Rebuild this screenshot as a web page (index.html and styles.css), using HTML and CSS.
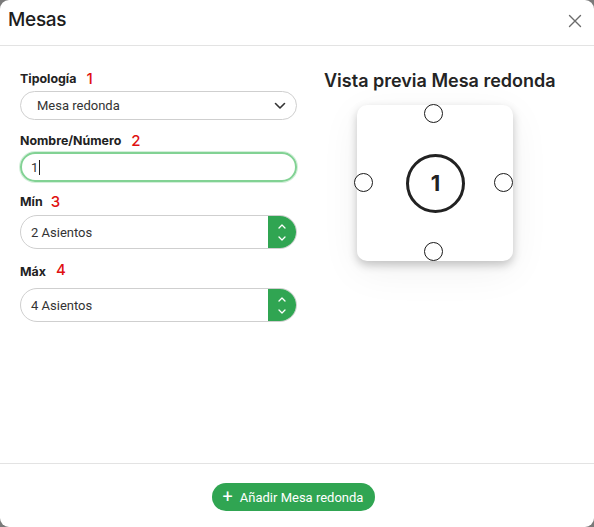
FILE: index.html
```html
<!DOCTYPE html>
<html lang="es">
<head>
<meta charset="utf-8">
<title>Mesas</title>
<link rel="stylesheet" href="styles.css">
</head>
<body>
<div class="modal">
  <header class="modal-header">
    <h1 class="modal-title">Mesas</h1>
    <button class="close-btn" aria-label="Cerrar">
      <svg width="14" height="14" viewBox="0 0 14 14"><path d="M1.5 1.5 L12.5 12.5 M12.5 1.5 L1.5 12.5" stroke="#6b6b6b" stroke-width="1.4" fill="none" stroke-linecap="round"/></svg>
    </button>
  </header>
  <main class="modal-body">
    <form class="form-col">
      <div class="field f1">
        <label class="label">Tipología <span class="num">1</span></label>
        <div class="select">
          <span>Mesa redonda</span>
          <svg width="12" height="8" viewBox="0 0 12 8"><path d="M1.5 1.5 L6 6 L10.5 1.5" stroke="#333" stroke-width="1.6" fill="none" stroke-linecap="round" stroke-linejoin="round"/></svg>
        </div>
      </div>
      <div class="field f2">
        <label class="label">Nombre/Número <span class="num">2</span></label>
        <div class="input focus"><span>1</span><span class="caret"></span></div>
      </div>
      <div class="field f3">
        <label class="label">Mín <span class="num">3</span></label>
        <div class="number">
          <span class="number-val">2 Asientos</span>
          <span class="spin">
            <svg width="8" height="5" viewBox="0 0 8 5"><path d="M1 4 L4 1 L7 4" stroke="#fff" stroke-width="1.3" fill="none" stroke-linecap="round" stroke-linejoin="round"/></svg>
            <svg width="8" height="5" viewBox="0 0 8 5"><path d="M1 1 L4 4 L7 1" stroke="#fff" stroke-width="1.3" fill="none" stroke-linecap="round" stroke-linejoin="round"/></svg>
          </span>
        </div>
      </div>
      <div class="field f4">
        <label class="label">Máx <span class="num">4</span></label>
        <div class="number">
          <span class="number-val">4 Asientos</span>
          <span class="spin">
            <svg width="8" height="5" viewBox="0 0 8 5"><path d="M1 4 L4 1 L7 4" stroke="#fff" stroke-width="1.3" fill="none" stroke-linecap="round" stroke-linejoin="round"/></svg>
            <svg width="8" height="5" viewBox="0 0 8 5"><path d="M1 1 L4 4 L7 1" stroke="#fff" stroke-width="1.3" fill="none" stroke-linecap="round" stroke-linejoin="round"/></svg>
          </span>
        </div>
      </div>
    </form>
    <section class="preview-col">
      <h2 class="preview-title">Vista previa Mesa redonda</h2>
      <div class="card">
        <span class="seat seat-top"></span>
        <span class="seat seat-left"></span>
        <span class="seat seat-right"></span>
        <span class="seat seat-bottom"></span>
        <div class="table">1</div>
      </div>
    </section>
  </main>
  <footer class="modal-footer">
    <button class="add-btn"><span class="plus">+</span> Añadir Mesa redonda</button>
  </footer>
</div>
</body>
</html>
```
FILE: styles.css
```css
* { box-sizing: border-box; }
html, body { margin: 0; height: 100%; }
body {
  background: #7a7a7a;
  font-family: Inter, "Noto Sans", "Liberation Sans", sans-serif;
  color: #222;
}
.modal {
  width: 594px;
  height: 527px;
  background: #fff;
  border-radius: 9px;
  display: flex;
  flex-direction: column;
  overflow: hidden;
}
.modal-header {
  height: 46px;
  border-bottom: 1px solid #e3e3e3;
  display: flex;
  align-items: center;
  justify-content: space-between;
  padding: 0 12px 0 8px;
}
.modal-title {
  margin: 0;
  font-size: 19px;
  font-weight: 500;
  color: #1d1d1d;
  letter-spacing: -0.3px;
  margin-top: -6px;
}
.close-btn {
  border: 0;
  background: none;
  padding: 0;
  width: 14px;
  height: 14px;
  display: flex;
  margin-top: -4px;
}
.modal-body {
  flex: 1;
  display: flex;
  padding: 0 20px;
}
.form-col {
  width: 277px;
  display: flex;
  flex-direction: column;
}
.field { display: flex; flex-direction: column; }
.label {
  font-size: 12.4px;
  font-weight: 700;
  line-height: 16px;
  color: #222;
  display: flex;
  align-items: center;
  gap: 10px;
}
.num {
  color: #e01010;
  font-weight: 500;
  font-size: 15px;
}
.f1 { margin-top: 25px; }
.f1 .label { margin-bottom: 4px; }
.f2 { margin-top: 13px; }
.f2 .label { margin-bottom: 3px; }
.f3 { margin-top: 12px; }
.f3 .label { margin-bottom: 5px; }
.f3 .label { gap: 8px; }
.f4 { margin-top: 15px; }
.f4 .label { margin-bottom: 8px; }
.f4 .num { margin-top: -5px; }
.select, .input, .number-val, .add-btn {
  font-family: Roboto, "Noto Sans", "Liberation Sans", sans-serif;
}
.select {
  height: 29px;
  border: 1px solid #cfcfcf;
  border-radius: 15px;
  display: flex;
  align-items: center;
  justify-content: space-between;
  padding: 0 10px 0 16px;
  font-size: 13px;
  color: #333;
}
.input {
  height: 30px;
  border: 2px solid #82d294;
  border-radius: 15px;
  box-shadow: 0 0 0 1px rgba(130, 210, 148, 0.35);
  display: flex;
  align-items: center;
  padding: 0 9px;
  font-size: 13px;
  color: #333;
}
.caret {
  width: 1px;
  height: 15px;
  background: #222;
  margin-left: 1px;
}
.number {
  height: 34px;
  border: 1px solid #cfcfcf;
  border-radius: 17px;
  display: flex;
  align-items: stretch;
  overflow: hidden;
}
.number-val {
  flex: 1;
  display: flex;
  align-items: center;
  padding-left: 10px;
  font-size: 13px;
  color: #333;
}
.spin {
  width: 29px;
  margin: -1px -1px -1px 0;
  background: #30a552;
  border-radius: 0 17px 17px 0;
  display: flex;
  flex-direction: column;
  align-items: center;
  justify-content: center;
  gap: 7px;
  padding-right: 2px;
}
.spin svg { display: block; }
.preview-col {
  flex: 1;
  display: flex;
  flex-direction: column;
  padding-left: 27px;
}
.preview-title {
  margin: 24px 0 0;
  font-size: 18px;
  font-weight: 600;
  color: #242424;
  line-height: 22px;
}
.card {
  position: relative;
  width: 156px;
  height: 156px;
  margin: 13px 0 0 33px;
  background: #fff;
  border-radius: 10px;
  box-shadow: 0 4px 10px rgba(0, 0, 0, 0.22), 0 10px 40px rgba(0, 0, 0, 0.06);
  display: flex;
  align-items: center;
  justify-content: center;
}
.seat {
  position: absolute;
  width: 19px;
  height: 19px;
  border: 1px solid #1a1a1a;
  border-radius: 50%;
  background: #fff;
}
.seat-top { top: -1px; left: 67px; }
.seat-bottom { bottom: 0; left: 67px; }
.seat-left { left: -3px; top: 68px; }
.seat-right { right: 0; top: 68px; }
.table {
  width: 59px;
  height: 59px;
  border: 3px solid #222;
  border-radius: 50%;
  display: flex;
  align-items: center;
  justify-content: center;
  font-size: 22px;
  font-weight: 700;
  color: #222;
  margin: 0 0 0 1px;
}
.modal-footer {
  height: 64px;
  border-top: 1px solid #e3e3e3;
  display: flex;
  justify-content: center;
  align-items: flex-start;
  padding-top: 19px;
  padding-right: 7px;
}
.add-btn {
  height: 28px;
  border: 0;
  border-radius: 14px;
  background: #30a552;
  color: #fff;
  font-size: 13px;
  padding: 0 12px 0 11px;
  display: flex;
  align-items: center;
  gap: 7px;
}
.plus { font-size: 18px; line-height: 1; margin-top: 0; }
```
